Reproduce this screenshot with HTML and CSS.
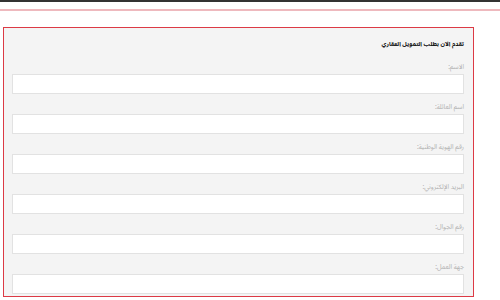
FILE: index.html
```html
<!DOCTYPE html>
<html lang="ar" dir="rtl">
<head>
    <meta charset="UTF-8">
    <meta name="viewport" content="width=device-width, initial-scale=1.0">
    <title>طلب التمويل العقاري</title>
    <link rel="stylesheet" href="styles.css">
</head>
<body>
    <div class="top-bar"></div>
    <div class="top-line"></div>

    <form class="request-box">
        <h3 class="request-title">تقدم الآن بطلب التمويل العقاري</h3>

        <label class="field-label" for="fname">الاسم:</label>
        <input class="field-input" type="text" id="fname">

        <label class="field-label" for="lname">اسم العائلة:</label>
        <input class="field-input" type="text" id="lname">

        <label class="field-label" for="nid">رقم الهوية الوطنية:</label>
        <input class="field-input" type="text" id="nid">

        <label class="field-label" for="email">البريد الإلكتروني:</label>
        <input class="field-input" type="text" id="email">

        <label class="field-label" for="mobile">رقم الجوال:</label>
        <input class="field-input" type="text" id="mobile">

        <label class="field-label" for="work">جهة العمل:</label>
        <input class="field-input" type="text" id="work">
    </form>
</body>
</html>
```

FILE: styles.css
```css
body {
    margin: 0;
    background-color: #fff;
    font-family: "Noto Sans Arabic", "DejaVu Sans Condensed", "DejaVu Sans", sans-serif;
    overflow: hidden;
}

.top-bar {
    height: 2px;
    background-color: #333;
}

.top-line {
    height: 2px;
    margin-top: 7px;
    background-color: #eeb9be;
}

.request-box {
    display: flex;
    flex-direction: column;
    width: 452px;
    margin: 16px 26px 0 0;
    padding: 10px 9px 2px 8px;
    background-color: #f4f4f4;
    border: 1px solid #dc3a45;
}

.request-title {
    margin: 0 0 12px 0;
    font-size: 6px;
    line-height: 12px;
    font-weight: bold;
    color: #111;
}

.field-label {
    display: block;
    margin-bottom: 2px;
    font-size: 6.5px;
    line-height: 10px;
    color: #b0b0b0;
}

.field-input {
    box-sizing: border-box;
    height: 20px;
    margin: 0 0 8px 0;
    padding: 2px 6px;
    background-color: #fff;
    border: 1px solid #e2e2e2;
    outline: none;
}

.field-input:last-child {
    margin-bottom: 0;
}
```
